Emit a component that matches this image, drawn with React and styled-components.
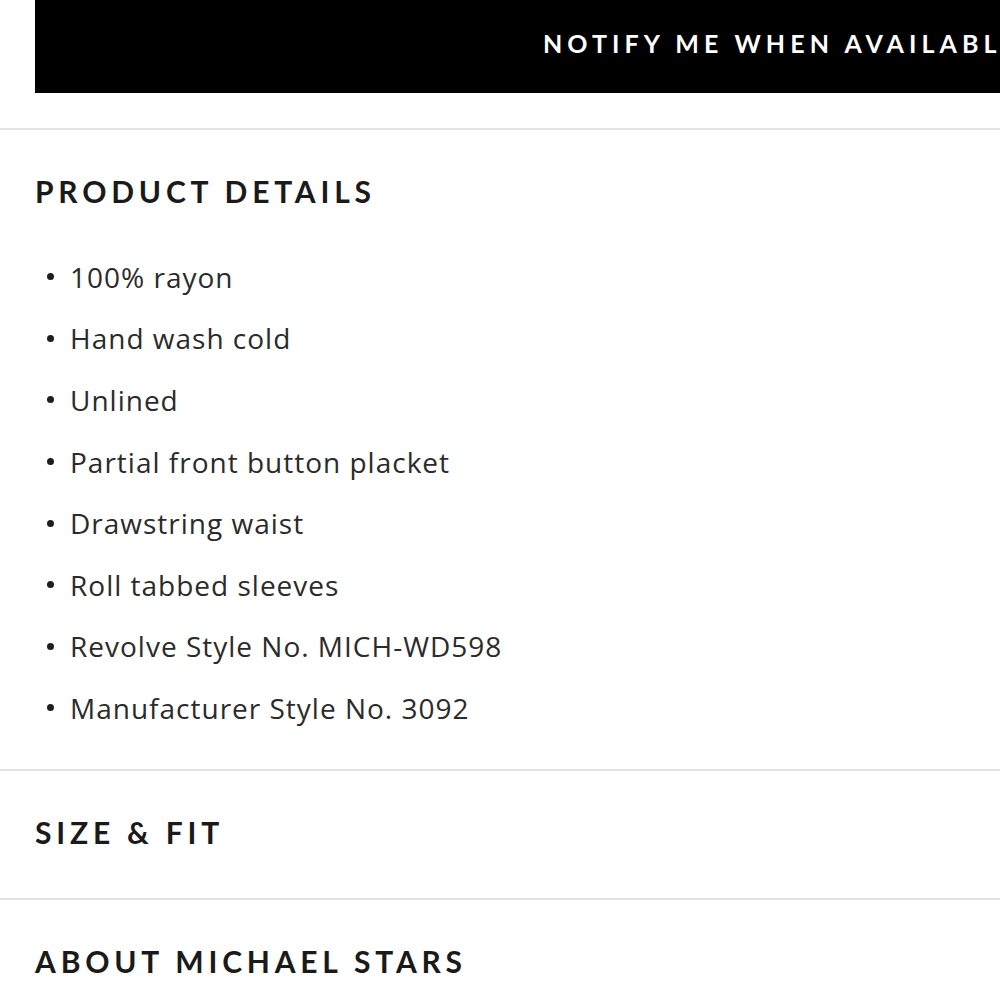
import React from "react";
import styled, { createGlobalStyle } from "styled-components";

const GlobalStyle = createGlobalStyle`
  html, body {
    margin: 0;
    padding: 0;
    background: #ffffff;
    overflow: hidden;
  }
  body {
    font-family: Lato, "Liberation Sans", sans-serif;
  }
`;

const details = [
  "100% rayon",
  "Hand wash cold",
  "Unlined",
  "Partial front button placket",
  "Drawstring waist",
  "Roll tabbed sleeves",
  "Revolve Style No. MICH-WD598",
  "Manufacturer Style No. 3092",
];

const App = () => {
  return (
    <Page>
      <GlobalStyle />
      <ButtonRow>
        <NotifyButton>NOTIFY ME WHEN AVAILABLE</NotifyButton>
      </ButtonRow>
      <Section $bottom={30}>
        <SectionTitle>PRODUCT DETAILS</SectionTitle>
        <DetailList>
          {details.map((item) => (
            <DetailItem key={item}>{item}</DetailItem>
          ))}
        </DetailList>
      </Section>
      <Section>
        <SectionTitle>SIZE &amp; FIT</SectionTitle>
      </Section>
      <Section>
        <SectionTitle>ABOUT MICHAEL STARS</SectionTitle>
      </Section>
    </Page>
  );
};

export default App;

const Page = styled.div`
  width: 1000px;
  overflow: hidden;
`;

const ButtonRow = styled.div`
  padding: 0 0 35px 35px;
`;

const NotifyButton = styled.button`
  display: flex;
  align-items: center;
  justify-content: center;
  width: 1494px;
  height: 93px;
  padding: 0 0 8px;
  border: none;
  background: #000000;
  color: #ffffff;
  font-family: Lato, "Liberation Sans", sans-serif;
  font-weight: 700;
  font-size: 25px;
  letter-spacing: 5.1px;
  cursor: pointer;
`;

const Section = styled.section`
  border-top: 2px solid #e3e3e3;
  padding: 43px 35px ${(p) => p.$bottom ?? 48}px;
`;

const SectionTitle = styled.h2`
  margin: 0;
  font-family: Lato, "Liberation Sans", sans-serif;
  font-weight: 700;
  font-size: 30px;
  line-height: 36px;
  letter-spacing: 4.8px;
  color: #1a1a1a;
`;

const DetailList = styled.ul`
  list-style: none;
  margin: 37px 0 0;
  padding: 0;
`;

const DetailItem = styled.li`
  display: flex;
  align-items: center;
  gap: 16px;
  height: 61.6px;
  padding-left: 12px;
  font-family: "Open Sans", Lato, sans-serif;
  font-size: 28px;
  letter-spacing: 1px;
  color: #2b2b2b;

  &::before {
    content: "";
    width: 7px;
    height: 7px;
    border-radius: 50%;
    background: #1e1e1e;
    flex-shrink: 0;
  }
`;
